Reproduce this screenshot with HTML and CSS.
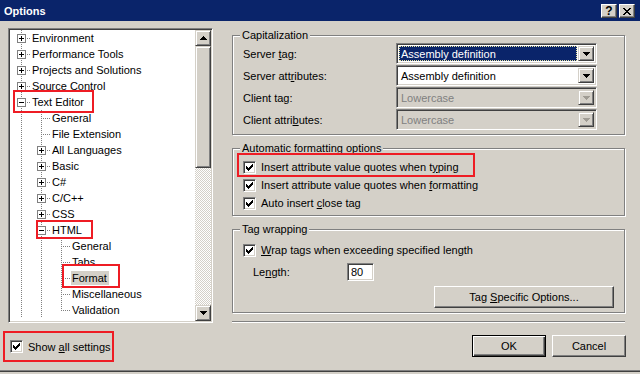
FILE: index.html
```html
<!DOCTYPE html>
<html lang="en">
<head>
    <meta charset="UTF-8">
    <meta name="viewport" content="width=device-width, initial-scale=1.0">
    <title>Options</title>
    <link rel="stylesheet" href="styles.css">
</head>
<body>
    <!-- Shared glyphs -->
    <svg class="defs" width="0" height="0">
        <symbol id="check" viewBox="0 0 7 7"><path d="M0 2h1v3H0zM1 3h1v3H1zM2 4h1v3H2zM3 3h1v3H3zM4 2h1v3H4zM5 1h1v3H5zM6 0h1v3H6z"/></symbol>
        <symbol id="down" viewBox="0 0 7 4"><path d="M0 0h7v1H0zM1 1h5v1H1zM2 2h3v1H2zM3 3h1v1H3z"/></symbol>
        <symbol id="up" viewBox="0 0 7 4"><path d="M3 0h1v1H3zM2 1h3v1H2zM1 2h5v1H1zM0 3h7v1H0z"/></symbol>
        <symbol id="plus" viewBox="0 0 9 9"><rect x=".5" y=".5" width="8" height="8" fill="#fff" stroke="#808080"/><path d="M2 4h5v1H2zM4 2h1v5H4z"/></symbol>
        <symbol id="minus" viewBox="0 0 9 9"><rect x=".5" y=".5" width="8" height="8" fill="#fff" stroke="#808080"/><path d="M2 4h5v1H2z"/></symbol>
        <symbol id="close" viewBox="0 0 8 7"><path d="M0 0h2v1H0zM6 0h2v1H6zM1 1h2v1H1zM5 1h2v1H5zM2 2h4v1H2zM3 3h2v1H3zM2 4h4v1H2zM1 5h2v1H1zM5 5h2v1H5zM0 6h2v1H0zM6 6h2v1H6z"/></symbol>
    </svg>

    <div class="window">
        <!-- Title bar -->
        <div class="titlebar">
            <span class="title">Options</span>
            <div class="caption-buttons">
                <span class="caption-btn">?</span>
                <span class="caption-btn"><svg class="close-icon"><use href="#close"/></svg></span>
            </div>
        </div>

        <div class="main">
            <!-- Category tree -->
            <div class="tree">
                <div class="tree-items">
                    <div class="row"><span class="node"><svg class="exp"><use href="#plus"/></svg></span><span class="label">Environment</span></div>
                    <div class="row"><span class="node"><svg class="exp"><use href="#plus"/></svg></span><span class="label">Performance Tools</span></div>
                    <div class="row"><span class="node"><svg class="exp"><use href="#plus"/></svg></span><span class="label">Projects and Solutions</span></div>
                    <div class="row"><span class="node"><svg class="exp"><use href="#plus"/></svg></span><span class="label">Source Control</span></div>
                    <div class="row"><span class="node"><svg class="exp"><use href="#minus"/></svg></span><span class="label mark mark-text-editor">Text Editor</span></div>
                    <div class="row"><span class="guide"></span><span class="node leaf"></span><span class="label">General</span></div>
                    <div class="row"><span class="guide"></span><span class="node leaf"></span><span class="label">File Extension</span></div>
                    <div class="row"><span class="guide"></span><span class="node"><svg class="exp"><use href="#plus"/></svg></span><span class="label">All Languages</span></div>
                    <div class="row"><span class="guide"></span><span class="node"><svg class="exp"><use href="#plus"/></svg></span><span class="label">Basic</span></div>
                    <div class="row"><span class="guide"></span><span class="node"><svg class="exp"><use href="#plus"/></svg></span><span class="label">C#</span></div>
                    <div class="row"><span class="guide"></span><span class="node"><svg class="exp"><use href="#plus"/></svg></span><span class="label">C/C++</span></div>
                    <div class="row"><span class="guide"></span><span class="node"><svg class="exp"><use href="#plus"/></svg></span><span class="label">CSS</span></div>
                    <div class="row"><span class="guide"></span><span class="node"><svg class="exp"><use href="#minus"/></svg></span><span class="label mark mark-html">HTML</span></div>
                    <div class="row"><span class="guide"></span><span class="guide"></span><span class="node leaf"></span><span class="label">General</span></div>
                    <div class="row"><span class="guide"></span><span class="guide"></span><span class="node leaf"></span><span class="label">Tabs</span></div>
                    <div class="row"><span class="guide"></span><span class="guide"></span><span class="node leaf"></span><span class="label selected mark mark-format">Format</span></div>
                    <div class="row"><span class="guide"></span><span class="guide"></span><span class="node leaf"></span><span class="label">Miscellaneous</span></div>
                    <div class="row"><span class="guide"></span><span class="guide"></span><span class="node leaf last"></span><span class="label">Validation</span></div>
                </div>
                <div class="scrollbar">
                    <div class="sb-btn"><svg class="arrow"><use href="#up"/></svg></div>
                    <div class="sb-thumb"></div>
                    <div class="sb-track"></div>
                    <div class="sb-btn"><svg class="arrow"><use href="#down"/></svg></div>
                </div>
            </div>

            <!-- Settings panel -->
            <div class="panel">
                <fieldset class="group">
                    <legend>Capitalization</legend>
                    <div class="caps-body">
                        <div class="field-row">
                            <span class="field-label">Server <u>t</u>ag:</span>
                            <div class="combo">
                                <span class="combo-value selected">Assembly definition</span>
                                <span class="combo-btn"><svg class="arrow"><use href="#down"/></svg></span>
                            </div>
                        </div>
                        <div class="field-row">
                            <span class="field-label">Server att<u>r</u>ibutes:</span>
                            <div class="combo">
                                <span class="combo-value">Assembly definition</span>
                                <span class="combo-btn"><svg class="arrow"><use href="#down"/></svg></span>
                            </div>
                        </div>
                        <div class="field-row">
                            <span class="field-label">Client ta<u>g</u>:</span>
                            <div class="combo disabled">
                                <span class="combo-value">Lowercase</span>
                                <span class="combo-btn"><svg class="arrow"><use href="#down"/></svg></span>
                            </div>
                        </div>
                        <div class="field-row">
                            <span class="field-label">Client attri<u>b</u>utes:</span>
                            <div class="combo disabled">
                                <span class="combo-value">Lowercase</span>
                                <span class="combo-btn"><svg class="arrow"><use href="#down"/></svg></span>
                            </div>
                        </div>
                    </div>
                </fieldset>

                <fieldset class="group">
                    <legend>Automatic formatting options</legend>
                    <div class="auto-body">
                        <div class="check-row mark mark-typing">
                            <span class="check"><svg class="tick"><use href="#check"/></svg></span>
                            <span>Insert attribute value quotes when t<u>y</u>ping</span>
                        </div>
                        <div class="check-row">
                            <span class="check"><svg class="tick"><use href="#check"/></svg></span>
                            <span>Insert attribute value quotes when <u>f</u>ormatting</span>
                        </div>
                        <div class="check-row">
                            <span class="check"><svg class="tick"><use href="#check"/></svg></span>
                            <span>Auto insert <u>c</u>lose tag</span>
                        </div>
                    </div>
                </fieldset>

                <fieldset class="group">
                    <legend>Tag wrapping</legend>
                    <div class="wrap-body">
                        <div class="check-row">
                            <span class="check"><svg class="tick"><use href="#check"/></svg></span>
                            <span><u>W</u>rap tags when exceeding specified length</span>
                        </div>
                        <div class="length-row">
                            <span class="length-label">Le<u>n</u>gth:</span>
                            <span class="textbox">80</span>
                        </div>
                        <div class="button-row">
                            <span class="btn btn-wide"><span>Tag <u>S</u>pecific Options...</span></span>
                        </div>
                    </div>
                </fieldset>

                <div class="separator"></div>
            </div>
        </div>

        <!-- Bottom bar -->
        <div class="footer">
            <div class="show-all mark mark-show-all">
                <span class="check"><svg class="tick"><use href="#check"/></svg></span>
                <span>Show <u>a</u>ll settings</span>
            </div>
            <div class="dialog-buttons">
                <span class="btn btn-default">OK</span>
                <span class="btn">Cancel</span>
            </div>
        </div>
    </div>
</body>
</html>
```

FILE: styles.css
```css
/* Classic Windows dialog look */
* {
    box-sizing: border-box;
}

body {
    margin: 0;
    background-color: #d4d0c8;
    font-family: "Liberation Sans", Arial, sans-serif;
    font-size: 11px;
    color: #000;
}

.defs {
    position: absolute;
}

.window {
    width: 640px;
    height: 372px;
    display: flex;
    flex-direction: column;
    border-bottom: 1px solid #404040;
    box-shadow: inset 0 -1px #808080;
}

/* Title bar */
.titlebar {
    height: 21px;
    flex: none;
    display: flex;
    justify-content: space-between;
    align-items: center;
    padding: 0 5px 0 4px;
    background-color: #0a246a;
    color: #fff;
    font-weight: bold;
}

.caption-buttons {
    display: flex;
    gap: 2px;
    margin-top: 1px;
}

.caption-btn {
    width: 16px;
    height: 14px;
    display: flex;
    align-items: center;
    justify-content: center;
    background-color: #d4d0c8;
    color: #000;
    border: 1px solid;
    border-color: #fff #404040 #404040 #fff;
    box-shadow: inset -1px -1px #808080;
    font-size: 12px;
    font-weight: bold;
}

.close-icon {
    width: 8px;
    height: 7px;
}

/* Main area */
.main {
    height: 302px;
    flex: none;
    display: flex;
    align-items: flex-start;
    padding: 7px 0 0 8px;
}

/* Tree view */
.tree {
    width: 205px;
    height: 295px;
    flex: none;
    display: flex;
    padding: 1px;
    background-color: #fff;
    border: 1px solid;
    border-color: #808080 #fff #fff #808080;
    box-shadow: inset 1px 1px #404040, inset -1px -1px #d4d0c8;
}

.tree-items {
    flex: 1;
    padding-left: 1px;
    overflow: hidden;
}

.row {
    display: flex;
    height: 16px;
    white-space: nowrap;
}

.guide,
.node {
    width: 20px;
    height: 16px;
    flex: none;
}

.guide {
    background: repeating-linear-gradient(#808080 0 1px, transparent 1px 2px) 10px 0 / 1px 100% no-repeat;
}

.node {
    background:
        repeating-linear-gradient(#808080 0 1px, transparent 1px 2px) 10px 0 / 1px 100% no-repeat,
        repeating-linear-gradient(to right, #808080 0 1px, transparent 1px 2px) 10px 8px / 10px 1px no-repeat;
}

.node.last {
    background:
        repeating-linear-gradient(#808080 0 1px, transparent 1px 2px) 10px 0 / 1px 9px no-repeat,
        repeating-linear-gradient(to right, #808080 0 1px, transparent 1px 2px) 10px 8px / 10px 1px no-repeat;
}

.exp {
    display: block;
    width: 9px;
    height: 9px;
    margin: 4px 0 0 6px;
}

.label {
    height: 14px;
    margin-top: 1px;
    padding: 0 2px 0 1px;
    line-height: 14px;
}

.label.selected {
    background-color: #d4d0c8;
}

/* Scrollbar */
.scrollbar {
    width: 16px;
    flex: none;
    display: flex;
    flex-direction: column;
    background: repeating-conic-gradient(#d4d0c8 0 25%, #fff 0 50%) 0 0 / 2px 2px;
}

.sb-btn,
.sb-thumb,
.combo-btn {
    display: flex;
    align-items: center;
    justify-content: center;
    background-color: #d4d0c8;
    border: 1px solid;
    border-color: #d4d0c8 #404040 #404040 #d4d0c8;
    box-shadow: inset 1px 1px #fff, inset -1px -1px #808080;
}

.sb-btn {
    height: 16px;
    flex: none;
}

.sb-thumb {
    height: 122px;
    flex: none;
}

.sb-track {
    flex: 1;
}

.arrow {
    width: 7px;
    height: 4px;
}

/* Right panel */
.panel {
    width: 393px;
    flex: none;
    margin-left: 19px;
    padding-top: 1px;
    display: flex;
    flex-direction: column;
}

.group {
    margin: 0;
    padding: 0;
    min-width: 0;
    border: 1px solid #808080;
    box-shadow: inset 1px 1px #fff, 1px 1px #fff;
}

.group + .group {
    margin-top: 7px;
}

.group legend {
    margin-left: 7px;
    padding: 0 2px;
    line-height: 13px;
    background-color: #d4d0c8;
}

.caps-body {
    display: flex;
    flex-direction: column;
    gap: 1px;
    padding: 1px 0 4px 10px;
}

.field-row {
    display: flex;
    align-items: center;
    height: 21px;
}

.field-label {
    width: 153px;
}

/* Combo boxes */
.combo {
    width: 201px;
    height: 21px;
    display: flex;
    padding: 2px;
    background-color: #fff;
    border: 1px solid;
    border-color: #808080 #fff #fff #808080;
    box-shadow: inset 1px 1px #404040, inset -1px -1px #d4d0c8;
}

.combo-value {
    flex: 1;
    display: flex;
    align-items: center;
    padding-left: 2px;
    margin-right: 1px;
}

.combo-value.selected {
    background-color: #0a246a;
    color: #fff;
    outline: 1px dotted #e8e4a0;
    outline-offset: -1px;
}

.combo-btn {
    width: 16px;
    flex: none;
}

.combo.disabled {
    background-color: #d4d0c8;
}

.combo.disabled .combo-value {
    color: #808080;
}

.combo.disabled .arrow {
    fill: #a09c94;
}

/* Check boxes */
.auto-body {
    padding: 3px 0 3px 10px;
}

.check-row {
    display: flex;
    align-items: center;
    gap: 5px;
    height: 18px;
    width: max-content;
}

.check {
    width: 13px;
    height: 13px;
    flex: none;
    display: flex;
    align-items: center;
    justify-content: center;
    background-color: #fff;
    border: 1px solid;
    border-color: #808080 #fff #fff #808080;
    box-shadow: inset 1px 1px #404040, inset -1px -1px #d4d0c8;
}

.tick {
    width: 7px;
    height: 7px;
}

/* Tag wrapping */
.wrap-body {
    padding: 5px 10px 4px 10px;
}

.length-row {
    display: flex;
    align-items: center;
    height: 18px;
    margin-top: 4px;
    padding-left: 10px;
}

.length-label {
    width: 94px;
}

.textbox {
    width: 27px;
    height: 18px;
    padding-left: 3px;
    line-height: 16px;
    background-color: #fff;
    border: 1px solid;
    border-color: #808080 #fff #fff #808080;
    box-shadow: inset 1px 1px #404040, inset -1px -1px #d4d0c8;
}

.button-row {
    display: flex;
    justify-content: flex-end;
    margin-top: 5px;
}

/* Push buttons */
.btn {
    width: 74px;
    height: 22px;
    display: flex;
    align-items: center;
    justify-content: center;
    background-color: #d4d0c8;
    border: 1px solid;
    border-color: #fff #404040 #404040 #fff;
    box-shadow: inset -1px -1px #808080;
}

.btn-wide {
    width: 180px;
}

.btn-default {
    border: 1px solid #000;
    box-shadow: inset 1px 1px #fff, inset -1px -1px #404040, inset -2px -2px #808080;
}

.separator {
    height: 2px;
    margin-top: 8px;
    border-top: 1px solid #808080;
    border-bottom: 1px solid #fff;
}

/* Bottom bar */
.footer {
    flex: 1;
    display: flex;
    justify-content: space-between;
    align-items: flex-start;
    padding: 12px 14px 0 10px;
}

.show-all {
    display: flex;
    align-items: center;
    gap: 5px;
    height: 13px;
    margin-top: 5px;
}

.dialog-buttons {
    display: flex;
    gap: 6px;
}

/* Red annotation boxes */
.mark {
    position: relative;
}

.mark::after {
    content: "";
    position: absolute;
    border: 2px solid #ee1c24;
}

.mark-text-editor::after {
    top: -5px;
    bottom: -4px;
    left: -18px;
    right: -8px;
}

.mark-html::after {
    top: -3px;
    bottom: -2px;
    left: -15px;
    right: -9px;
}

.mark-format::after {
    top: -7px;
    bottom: -3px;
    left: -9px;
    right: -11px;
}

.mark-typing::after {
    top: -5px;
    bottom: -1px;
    left: -6px;
    right: -16px;
}

.mark-show-all::after {
    top: -9px;
    bottom: -9px;
    left: -7px;
    right: -3px;
}
```
